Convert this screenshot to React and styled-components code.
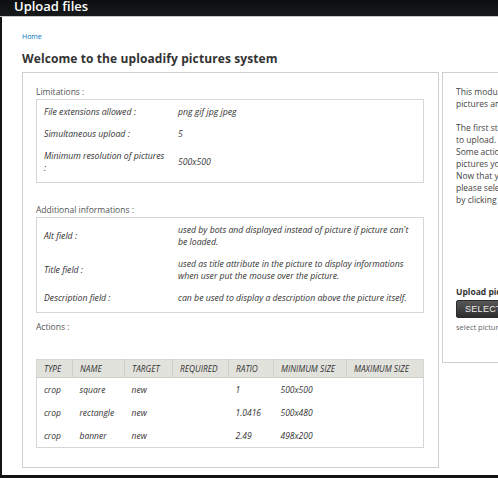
import React from 'react';
import styled, { createGlobalStyle } from 'styled-components';

const GlobalStyle = createGlobalStyle`
  html, body {
    margin: 0;
    padding: 0;
    background: #111314;
  }
  body {
    font-family: "Open Sans", "DejaVu Sans", sans-serif;
    color: #333;
  }
`;

// lines are split by hand so the wrapping matches the original page
const limitations = [
  { label: ['File extensions allowed :'], value: ['png gif jpg jpeg'] },
  { label: ['Simultaneous upload :'], value: ['5'] },
  { label: ['Minimum resolution of pictures', ':'], value: ['500x500'] },
];

const infos = [
  { label: ['Alt field :'], value: ["used by bots and displayed instead of picture if picture can't", 'be loaded.'] },
  { label: ['Title field :'], value: ['used as title attribute in the picture to display informations', 'when user put the mouse over the picture.'] },
  { label: ['Description field :'], value: ['can be used to display a description above the picture itself.'] },
];

const columns = ['TYPE', 'NAME', 'TARGET', 'REQUIRED', 'RATIO', 'MINIMUM SIZE', 'MAXIMUM SIZE'];
const colWidths = [36, 52, 48, 56, 45, 73, 77];

const actions = [
  ['crop', 'square', 'new', '', '1', '500x500', ''],
  ['crop', 'rectangle', 'new', '', '1.0416', '500x480', ''],
  ['crop', 'banner', 'new', '', '2.49', '498x200', ''],
];

const Lines = ({ lines }) => lines.map((l, i) => <div key={i}>{l}</div>);

const App = () => {
  return (
    <Page>
      <GlobalStyle />
      <TopBar>Upload files</TopBar>
      <Content>
        <Breadcrumb href="#">Home</Breadcrumb>
        <Title>Welcome to the uploadify pictures system</Title>
        <Columns>
          <MainPanel>
            <SectionLabel>Limitations :</SectionLabel>
            <InfoBox>
              {limitations.map((row, i) => (
                <InfoRow key={i}>
                  <InfoLabel><Lines lines={row.label} /></InfoLabel>
                  <InfoValue><Lines lines={row.value} /></InfoValue>
                </InfoRow>
              ))}
            </InfoBox>

            <SectionLabel top={21}>Additional informations :</SectionLabel>
            <InfoBox>
              {infos.map((row, i) => (
                <InfoRow key={i}>
                  <InfoLabel><Lines lines={row.label} /></InfoLabel>
                  <InfoValue><Lines lines={row.value} /></InfoValue>
                </InfoRow>
              ))}
            </InfoBox>

            <SectionLabel top={8}>Actions :</SectionLabel>
            <ActionTable>
              <colgroup>
                {colWidths.map((w, i) => <col key={i} style={{ width: w }} />)}
              </colgroup>
              <thead>
                <tr>
                  {columns.map((c) => <HeadCell key={c}>{c}</HeadCell>)}
                </tr>
              </thead>
              <tbody>
                {actions.map((row, i) => (
                  <tr key={i}>
                    {row.map((cell, j) => <Cell key={j}>{cell}</Cell>)}
                  </tr>
                ))}
              </tbody>
            </ActionTable>
          </MainPanel>

          <SidePanel>
            <Paragraph>
              This module allows you to upload your<br />
              pictures and apply actions on them.
            </Paragraph>
            <Paragraph>
              The first step is to select the pictures you want<br />
              to upload.<br />
              Some actions are then applied to the<br />
              pictures you uploaded.<br />
              Now that you know how it works,<br />
              please select the pictures to upload<br />
              by clicking on the button below.
            </Paragraph>
            <UploadBlock>
              <UploadTitle>Upload pictures</UploadTitle>
              <SelectButton>SELECT FILES</SelectButton>
              <Hint>select pictures to upload</Hint>
            </UploadBlock>
          </SidePanel>
        </Columns>
      </Content>
    </Page>
  );
};

export default App;

const Page = styled.div`
  width: 498px;
  height: 478px;
  overflow: hidden;
  background: #111314;
`;

const TopBar = styled.div`
  height: 16px;
  line-height: 13px;
  padding-left: 14px;
  font-size: 13px;
  font-weight: 600;
  color: #fff;
  background: linear-gradient(#0d0e0f, #16191a);
  border-bottom: 1px solid #c8c8c8;
  overflow: hidden;
`;

const Content = styled.div`
  margin-left: 2px;
  height: 458px;
  background: #fff;
  padding: 15px 0 0 20px;
  box-sizing: border-box;
  overflow: hidden;
`;

const Breadcrumb = styled.a`
  display: block;
  font-size: 7px;
  line-height: 10px;
  color: #0074bd;
  text-decoration: none;
`;

const Title = styled.h1`
  margin: 8px 0 5px;
  font-size: 12px;
  line-height: 17px;
  font-weight: 700;
  color: #333;
  letter-spacing: 0.1px;
`;

const Columns = styled.div`
  display: flex;
  gap: 3px;
  align-items: flex-start;
`;

const MainPanel = styled.div`
  flex: 0 0 415px;
  box-sizing: border-box;
  height: 396px;
  border: 1px solid #cfcfcf;
  padding: 13px 14px 0 13px;
`;

const SectionLabel = styled.div`
  margin-top: ${(p) => p.top || 0}px;
  font-size: 8.5px;
  line-height: 12px;
  color: #555;
`;

const InfoBox = styled.div`
  margin-top: 1px;
  border: 1px solid #d6d6d6;
  padding: 1px 0 3px;
`;

const InfoRow = styled.div`
  display: flex;
  align-items: center;
  padding: 5px 7px;
  font-size: 8.7px;
  line-height: 12px;
  font-style: italic;
  color: #333;
  white-space: nowrap;
`;

const InfoLabel = styled.div`
  flex: 0 0 134px;
`;

const InfoValue = styled.div`
  flex: 1;
`;

const ActionTable = styled.table`
  margin-top: 26px;
  width: 387px;
  border-collapse: collapse;
  border: 1px solid #d6d6d6;
  table-layout: fixed;
`;

const HeadCell = styled.th`
  background: #e2e2dd;
  border-right: 1px solid #cfcfca;
  border-bottom: 1px solid #cfcfca;
  height: 17px;
  padding: 0 0 0 7px;
  text-align: left;
  font-size: 8.3px;
  font-weight: 400;
  font-style: italic;
  color: #333;
  white-space: nowrap;
  &:last-child { border-right: none; }
`;

const Cell = styled.td`
  height: 23px;
  padding: 0 0 0 7px;
  font-size: 8.5px;
  font-style: italic;
  color: #333;
  white-space: nowrap;
`;

const SidePanel = styled.div`
  flex: 0 0 200px;
  box-sizing: border-box;
  height: 291px;
  border: 1px solid #cfcfcf;
  padding: 13px 0 0 13px;
`;

const Paragraph = styled.p`
  margin: 0 0 12px;
  font-size: 8.5px;
  line-height: 12px;
  color: #444;
  white-space: nowrap;
`;

const UploadBlock = styled.div`
  margin-top: 80px;
`;

const UploadTitle = styled.div`
  font-size: 8.5px;
  line-height: 11px;
  font-weight: 700;
  color: #333;
`;

const SelectButton = styled.button`
  display: block;
  margin-top: 3px;
  height: 18px;
  padding: 0 8px;
  border: 1px solid #2a2a2a;
  border-radius: 2px;
  background: linear-gradient(#575757, #2e2e2e);
  color: #eee;
  font-family: "Liberation Sans", Arial, sans-serif;
  font-size: 9px;
  letter-spacing: 0.3px;
  cursor: pointer;
`;

const Hint = styled.div`
  margin-top: 4px;
  font-size: 7.5px;
  line-height: 10px;
  color: #666;
`;
